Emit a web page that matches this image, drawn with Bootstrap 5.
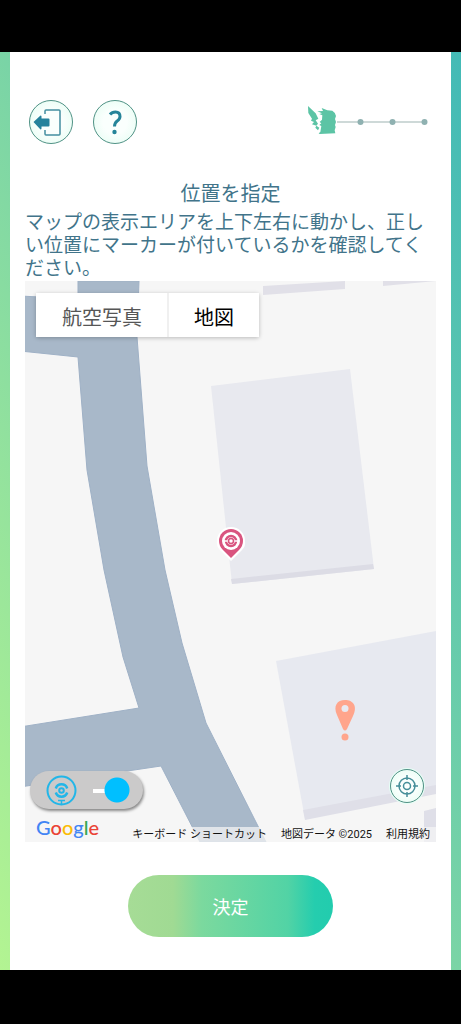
<!DOCTYPE html>
<html lang="ja">
<head>
<meta charset="utf-8">
<meta name="viewport" content="width=device-width, initial-scale=1">
<title>位置を指定</title>
<link href="https://cdn.jsdelivr.net/npm/bootstrap@5.3.0/dist/css/bootstrap.min.css" rel="stylesheet">
<style>
  body { font-family: "Noto Sans", "Noto Sans CJK JP", sans-serif; background: #000; color: #41748a; }
  .screen { padding: 52px 0 54px; }
  .frame { background: linear-gradient(to top right, #b3f492 0%, #7ad4a6 50%, #43bab6 100%); padding: 0 10px; }
  .sheet { background: #fff; padding: 48px 15px 33px; }
  .round-btn { width: 44px; height: 44px; border: 1px solid #4f9285; border-radius: 50%; background: radial-gradient(circle, #fafffd 40%, #e2fdf1 100%); }
  .top-tools { gap: 20px; }
  .steps { margin-right: 7px; }
  .title { font-size: 20px; line-height: 28px; margin-top: 36px; }
  .guide { font-size: 19px; line-height: 23px; margin-top: 3px; margin-bottom: 1px; }
  .map { aspect-ratio: 411 / 561; background: #f6f6f6; }
  .map-type { top: 12px; left: 11px; box-shadow: 0 1px 4px rgba(0,0,0,.25); border-radius: 2px; }
  .map-type button { height: 44px; border: 0; background: #fff; color: #565656; font-size: 20px; line-height: 44px; padding: 3px 25px 0 26px; font-family: "Roboto", "Noto Sans CJK JP", sans-serif; }
  .map-type button + button { color: #000; border-left: 2px solid #f0f0f0; padding-left: 25px; }
  .layer-switch { left: 5px; bottom: 33px; width: 113px; height: 38px; border-radius: 19px; background: #cbcaca; box-shadow: 1px 2px 3px rgba(0,0,0,.45); padding-left: 16px; padding-right: 12px; }
  .layer-switch input { appearance: none; width: 40px; height: 28px; margin: 0; background: radial-gradient(circle at 26px 14px, #00bfff 12px, transparent 13px), linear-gradient(#fff, #fff) 2px 13px / 20px 4px no-repeat; }
  .locate { right: 12px; bottom: 39px; width: 34px; height: 34px; box-shadow: 0 0 0 1px #e5fff5; }
  .glogo { left: 11px; bottom: 2px; font: 500 20px/26px "Lato", sans-serif; }
  .legal { right: 0; bottom: 0; font: 11px/14px "Roboto", "Noto Sans CJK JP", sans-serif; gap: 2px; }
  .legal > * { color: #111; background: rgba(245,245,245,.72); padding: 1px 6px 0; border: 0; }
  .confirm { width: 50%; max-width: 320px; height: 62px; margin-top: 33px; padding-top: 3px; border: 0; border-radius: 31px; color: #fff; font-size: 18px; background: linear-gradient(90deg, #a6dc96 0%, #a0da93 22%, #7bd99e 36%, #52d3a5 78%, #25cdae 91%, #22ccae 100%); }
</style>
</head>
<body>
<div class="screen min-vh-100 d-flex flex-column">
  <div class="frame flex-grow-1 d-flex">
    <main class="sheet flex-grow-1 d-flex flex-column">
      <header class="d-flex align-items-center justify-content-between">
        <div class="top-tools d-flex ps-1">
          <button type="button" class="round-btn p-0 d-flex align-items-center justify-content-center" aria-label="戻る">
            <svg width="40" height="40" viewBox="0 0 40 40"><path d="M14 12V9q0-1 1-1h13q1 0 1 1v23q0 1-1 1H15q-1 0-1-1v-4" fill="none" stroke="#438fa0" stroke-width="1.500"/><path d="M2.500 20l7-6.500q1 0 1 1v2h7q1 0 1 1v6q0 1-1 1h-7v2q0 1-1 1z" fill="#25829c"/></svg>
          </button>
          <button type="button" class="round-btn p-0 d-flex align-items-center justify-content-center" aria-label="ヘルプ">
            <svg width="40" height="40" viewBox="0 0 40 40"><path d="M15 12.500q2-2.500 5.500-2.500 4.500 0 4.500 4.500 0 2.500-2.800 4.500-2.700 2-2.700 5.500" fill="none" stroke="#258499" stroke-width="3"/><circle cx="19.500" cy="30" r="2.200" fill="#258499"/></svg>
          </button>
        </div>
        <svg class="steps" width="122" height="32" viewBox="307 106 122 32" role="img" aria-label="ステップ 1 / 4">
          <path d="M337 122H425" stroke="#ced9d8" stroke-width="2"/>
          <g fill="#8fb1b1"><circle cx="360.500" cy="122" r="3"/><circle cx="392.500" cy="122" r="3"/><circle cx="424.500" cy="122" r="3"/></g>
          <path transform="translate(290 90) scale(.3333)" d="M54 48L77 70L85 86L77 91L84 101L79 107L88 113L84 121L76 113L79 107L66 103L72 96L63 92L66 86L55 69ZM82 64L99 63L95 54L112 61L127 62Q137 68 138 78L135 87L138 96L135 105L137 111L134 121L136 130L89 132L86 130L91 126L94 108L88 105L94 100L89 96L96 89L97 76L88 72L96 70Z" fill="#5cc4a5"/>
        </svg>
      </header>

      <h1 class="title text-center mb-0 fw-normal">位置を指定</h1>
      <p class="guide">マップの表示エリアを上下左右に動かし、正しい位置にマーカーが付いているかを確認してください。</p>

      <section class="map position-relative overflow-hidden" aria-label="地図">
        <svg class="d-block w-100 h-100" viewBox="25 281 411 561" preserveAspectRatio="xMidYMid slice" aria-hidden="true">
          <rect x="25" y="281" width="411" height="561" fill="#f6f6f6"/>
          <path d="M78 281H139L137 337L147 466L165 570L182 643L206 723L266 842H200L161 766L20 787V727L139 708L123 657L104 570L87 470L78 357L20 351V296L78 299z" fill="#a8b8c9" stroke="#9fb1c6"/>
          <path d="M211 386L350 369L374 569L232 584z" fill="#e8e9ef"/>
          <path d="M231 579L373 564L374 569L232 584z" fill="#dcdce5"/>
          <path d="M276 661L436 631V793L305 819z" fill="#e7e9f0"/>
          <path d="M303 810L436 785V794L305 820zM424 811L436 808V842H424z" fill="#dfdfe8"/>
          <path d="M263 286L345 281V289L263 295zM383 281H436L383 286z" fill="#e1e0e8"/>
          <path d="M231 561L220 550Q216 546 217 541A14 14 0 0 1 245 541Q246 546 242 550z" fill="#fff"/>
          <path d="M231 558L223 550Q219 546 219 541A12 12 0 0 1 243 541Q243 546 239 550z" fill="#d9547f"/>
          <circle cx="231" cy="541" r="9" fill="#fff"/>
          <circle cx="231" cy="541" r="5" fill="none" stroke="#d9547f" stroke-width="2.500"/>
          <path d="M224 541H238" stroke="#fff" stroke-width="1.500"/><circle cx="231" cy="541" r="2.500" fill="#fff" stroke="#d9547f" stroke-width="1.500"/>
          <path d="M343 729L337 715C333 706 337 700 345 700S358 706 353 716L347 729Q345 732 343 729z" fill="#ffa58c"/>
          <circle cx="345" cy="708.500" r="3.500" fill="#e9e9f0"/><circle cx="345" cy="737" r="3.500" fill="#ffa58c"/>
        </svg>
        <div class="map-type position-absolute d-flex">
          <button type="button">航空写真</button><button type="button">地図</button>
        </div>
        <label class="layer-switch position-absolute d-flex align-items-center justify-content-between">
          <svg width="31" height="31" viewBox="0 0 31 31" fill="none" stroke="#22b6e8" stroke-width="2" aria-hidden="true"><circle cx="15.500" cy="15.500" r="14"/><path d="M9.800 13.500A6 6 0 0 1 21.200 13.500M9.800 17.500A6 6 0 0 0 21.200 17.500" stroke-width="2.500"/><circle cx="15.500" cy="15.500" r="2.300"/><path d="M12 25.500h7M15.500 25v4" stroke-width="1.500"/></svg>
          <input type="checkbox" role="switch" aria-label="ポケストップを表示" checked>
        </label>
        <button type="button" class="round-btn locate position-absolute p-0 d-flex align-items-center justify-content-center" aria-label="現在地">
          <svg width="24" height="24" viewBox="0 0 24 24" fill="none" stroke="#468f99" stroke-width="1.500"><circle cx="12" cy="12" r="8"/><circle cx="12" cy="12" r="3.500"/><path d="M12 1v5M12 18v5M1 12h5M18 12h5"/></svg>
        </button>
        <a href="#" class="glogo position-absolute text-decoration-none" aria-label="Google"><span style="color:#4285f4">G</span><span style="color:#ea4335">o</span><span style="color:#fbbc05">o</span><span style="color:#4285f4">g</span><span style="color:#34a853">l</span><span style="color:#ea4335">e</span></a>
        <div class="legal position-absolute d-flex text-nowrap">
          <button type="button">キーボード ショートカット</button>
          <span>地図データ ©2025</span>
          <a href="#" class="text-decoration-none">利用規約</a>
        </div>
      </section>

      <button type="button" class="confirm align-self-center">決定</button>
    </main>
  </div>
</div>
<script src="https://cdn.jsdelivr.net/npm/bootstrap@5.3.0/dist/js/bootstrap.bundle.min.js"></script>
</body>
</html>
